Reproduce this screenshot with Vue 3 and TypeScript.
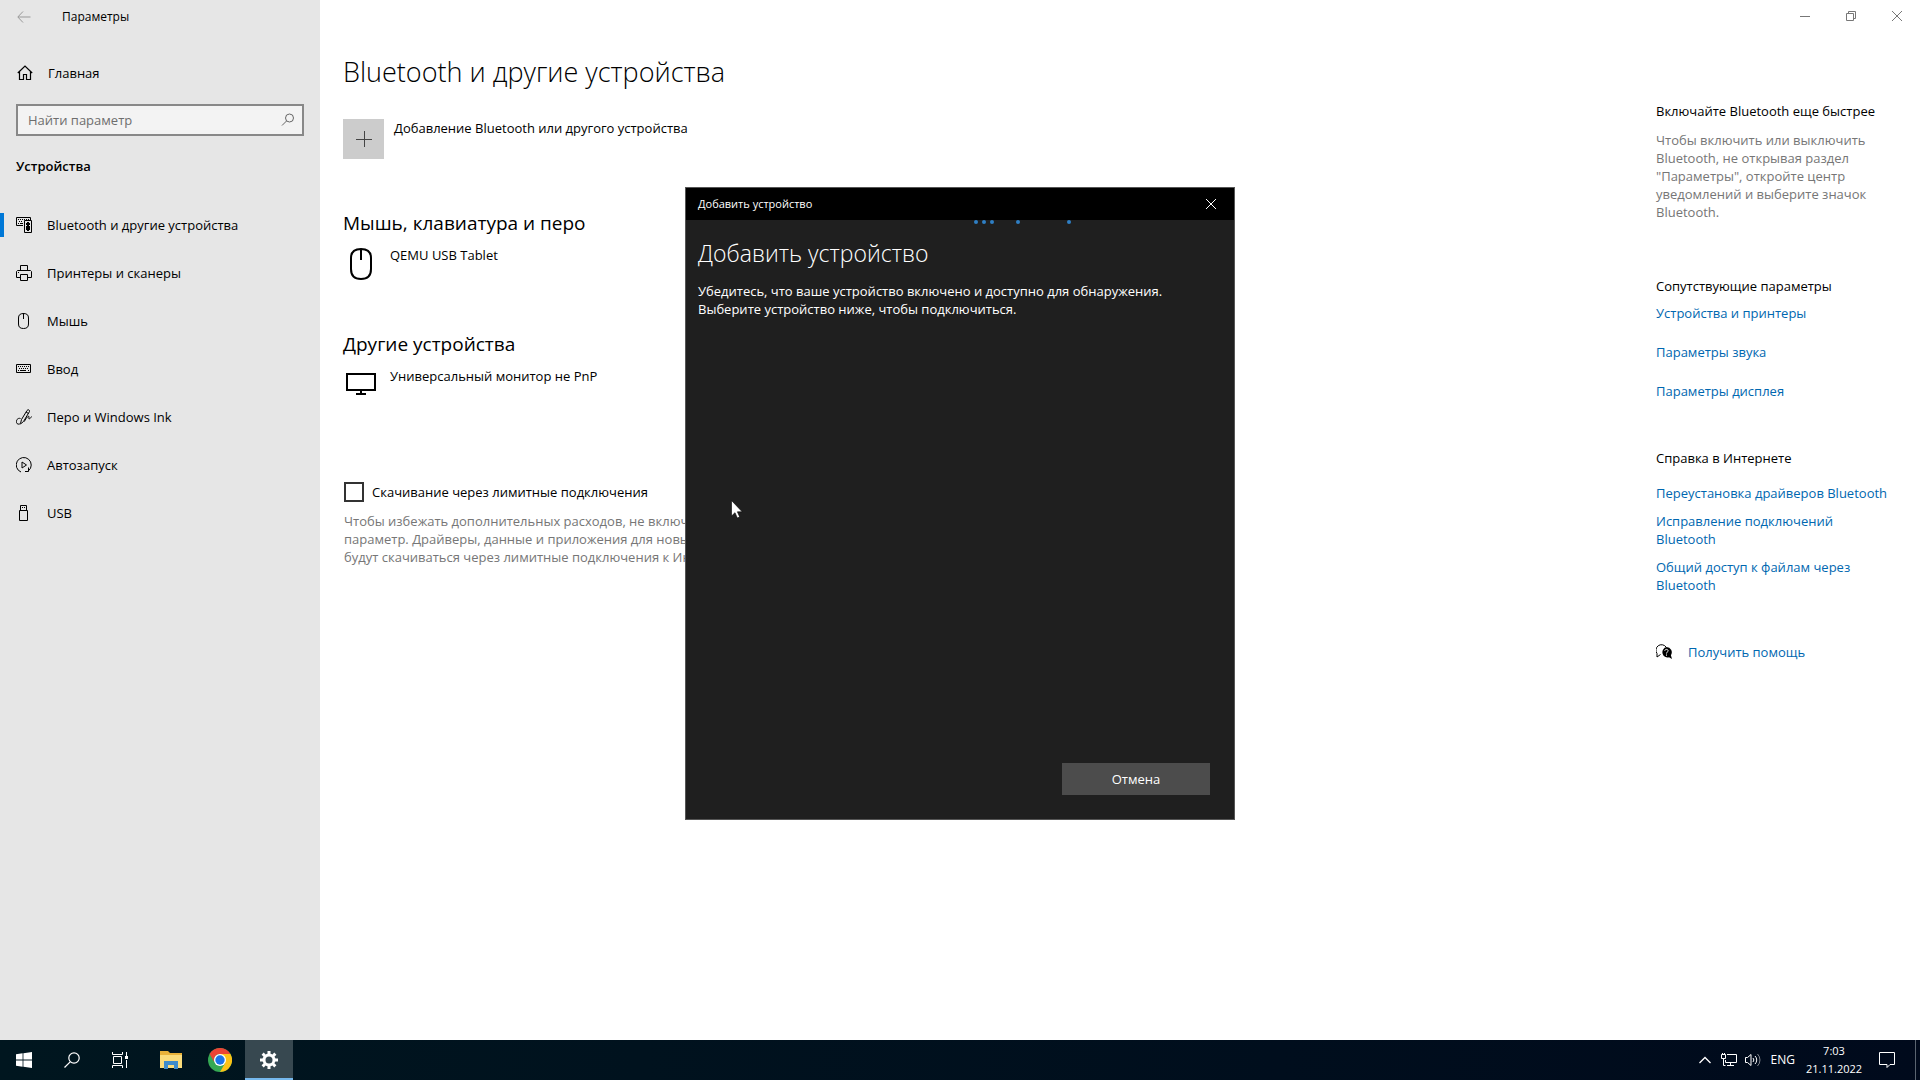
<script setup lang="ts">
import { ref } from 'vue'

interface NavItem {
  label: string
  stroke: string
  fill?: string
}

const navItems: NavItem[] = [
  {
    label: 'Bluetooth и другие устройства',
    stroke: 'M7 8.5H.5V.5H14.5V3M8.5 3.5h7v12h-7z',
    fill: 'M2 2h1v1H2zM4 2h1v1H4zM6 2h1v1H6zM8 2h1v1H8zM10 2h1v1h-1zM12 2h1v1h-1zM3 4h1v1H3zM5 4h1v1H5zM2 6h1v1H2zM4 6h3v1H4zM11 5h2v1h1v2h-1v1h1v4h-1v1h-2v-1h-1V9h1V8h-1V6h1z',
  },
  {
    label: 'Принтеры и сканеры',
    stroke: 'M4.5 5V.5h7V5M4.5 12.5h-4v-6l1-1h13l1 1v6h-4M4.5 9.5h7v6h-7z',
    fill: 'M2 7h1v1H2z',
  },
  { label: 'Мышь', stroke: 'M7.5 0v6M7.5.5c3.5 0 5 1.5 5 4.500v6c0 3-1.500 4.500-5 4.500s-5-1.500-5-4.500v-6c0-3 1.500-4.500 5-4.500z' },
  {
    label: 'Ввод',
    stroke: 'M.5 3.500h14v8H.5z',
    fill: 'M2 5h1v1H2zM4 5h1v1H4zM6 5h1v1H6zM8 5h1v1H8zM10 5h1v1h-1zM12 5h1v1h-1zM3 7h1v1H3zM5 7h1v1H5zM7 7h1v1H7zM9 7h1v1H9zM11 7h1v1h-1zM2 9h1v1H2zM4 9h6v1H4zM12 9h1v1h-1z',
  },
  {
    label: 'Перо и Windows Ink',
    stroke: 'M4.500 14.500l1-4L11 1.500c1-1.500 3-.5 2.500 1L7.500 12.500l-3 2.500M10 3l2.500 1.500M4.500 9.500C1.500 8.500 0 11.500.5 13.500s2.500 2 4 1M8.500 12.500c.5-2 3.500-6 4.500-5 .5.8-1 2 0 2.200s1.500-.5 2.500-2.200',
  },
  { label: 'Автозапуск', stroke: 'M5 15A7.500 7.500 0 1 1 12.500 13.800M12.500 10.500v4h-3.500M6 5l4.500 3L6 11z' },
  { label: 'USB', stroke: 'M3.500 5.500h8v10h-8zM4.500 5V.5h6V5', fill: 'M6 2h1v1H6zM8 2h1v1H8z' },
]

const relatedLinks = ['Устройства и принтеры', 'Параметры звука', 'Параметры дисплея']
const helpLinks = [
  'Переустановка драйверов Bluetooth',
  'Исправление подключений Bluetooth',
  'Общий доступ к файлам через Bluetooth',
]
const progressDots = [0, 8, 16, 42, 93]

const query = ref('')
const metered = ref(false)
</script>

<template>
  <div class="desktop">
    <div class="window">
      <aside class="sidebar">
        <div class="caption">
          <button class="back" aria-label="Назад">
            <svg width="14" height="12" viewBox="0 0 14 12" fill="none" stroke="currentColor"><path d="M6 .5L.8 6 6 11.500M1 6h12.500" /></svg>
          </button>
          <span>Параметры</span>
        </div>
        <a class="home" href="#">
          <svg width="16" height="16" viewBox="0 0 16 16" fill="none" stroke="currentColor" stroke-width="1.200">
            <path d="M.8 8L8 1l7.200 7M2.500 6.500v8h4V9.500h3v5h4v-8" />
          </svg>
          <span>Главная</span>
        </a>
        <div class="search">
          <input v-model="query" type="text" placeholder="Найти параметр" aria-label="Найти параметр" />
          <svg width="14" height="14" viewBox="0 0 14 14" fill="none" stroke="currentColor"><circle cx="8.500" cy="5" r="4" /><path d="M5.500 8L1 12.500" /></svg>
        </div>
        <h2 class="section">Устройства</h2>
        <nav>
          <a v-for="(item, i) in navItems" :key="item.label" href="#" class="nav-item" :class="{ active: i === 0 }">
            <svg width="16" height="16" viewBox="0 0 16 16">
              <path :d="item.stroke" fill="none" stroke="currentColor" />
              <path v-if="item.fill" :d="item.fill" fill="currentColor" />
            </svg>
            <span>{{ item.label }}</span>
          </a>
        </nav>
      </aside>

      <main class="content">
        <h1>Bluetooth и другие устройства</h1>
        <button class="add">
          <span class="plus">
            <svg width="16" height="16" viewBox="0 0 16 16" stroke="#444" stroke-width="1"><path d="M0 8.500h16M8.500 0v16" /></svg>
          </span>
          <span>Добавление Bluetooth или другого устройства</span>
        </button>

        <h2 class="group">Мышь, клавиатура и перо</h2>
        <div class="device">
          <svg width="36" height="32" viewBox="0 0 36 32" fill="none" stroke="#000" stroke-width="2">
            <path d="M18 1v11M18 1c7 0 10 3 10 9v11c0 7-3 10-10 10S8 28 8 21V10c0-6 3-9 10-9z" />
          </svg>
          <span>QEMU USB Tablet</span>
        </div>

        <h2 class="group">Другие устройства</h2>
        <div class="device">
          <svg width="36" height="32" viewBox="0 0 36 32" fill="none" stroke="#000" stroke-width="2">
            <path d="M4 5h28v16H4zM18 21v4M13 25h10" />
          </svg>
          <span>Универсальный монитор не PnP</span>
        </div>

        <label class="check">
          <input v-model="metered" type="checkbox" />
          <span>Скачивание через лимитные подключения</span>
        </label>
        <p class="note">
          Чтобы избежать дополнительных расходов, не включайте этот<br />
          параметр. Драйверы, данные и приложения для новых устройств<br />
          будут скачиваться через лимитные подключения к Интернету.
        </p>
      </main>

      <aside class="side">
        <div class="controls">
          <button aria-label="Свернуть"><svg width="10" height="10" viewBox="0 0 10 10"><path d="M0 5.500h10" /></svg></button>
          <button aria-label="Восстановить"><svg width="10" height="10" viewBox="0 0 10 10"><path d="M.5 2.500h7v7h-7zM2.500 2.500v-2h7v7h-2" /></svg></button>
          <button aria-label="Закрыть"><svg width="10" height="10" viewBox="0 0 10 10"><path d="M0 0l10 10M10 0L0 10" /></svg></button>
        </div>
        <div class="side-body">
          <h3>Включайте Bluetooth еще быстрее</h3>
          <p>Чтобы включить или выключить Bluetooth, не открывая раздел "Параметры", откройте центр уведомлений и выберите значок Bluetooth.</p>
          <section class="related">
            <h3>Сопутствующие параметры</h3>
            <a v-for="link in relatedLinks" :key="link" href="#">{{ link }}</a>
          </section>
          <section class="help">
            <h3>Справка в Интернете</h3>
            <a v-for="link in helpLinks" :key="link" href="#">{{ link }}</a>
          </section>
          <a class="support" href="#">
            <svg width="16" height="16" viewBox="0 0 16 16">
              <path d="M4.500 10.500L1 13V9.500A5 5 0 1 1 10 3" fill="none" stroke="#000" />
              <path d="M10.500 3a5.300 5.300 0 0 1 4.400 8.200L16 15l-3-1.700A5.300 5.300 0 1 1 10.500 3z" fill="#000" />
              <path d="M8.800 6.800c.2-2 3.400-1.800 3.300.1-.1 1.200-1.600 1.200-1.600 2.600M10.500 10.500v1.200" fill="none" stroke="#fff" />
            </svg>
            <span>Получить помощь</span>
          </a>
        </div>
      </aside>
    </div>

    <footer class="taskbar">
      <div class="apps">
        <button aria-label="Пуск">
          <svg width="16" height="16" viewBox="0 0 16 16" fill="#fff"><path d="M0 2.200L6.600 1.300v6.300H0zM7.400 1.200L16 0v7.600H7.400zM0 8.400h6.600v6.300L0 13.800zM7.400 8.400H16V16l-8.600-1.200z" /></svg>
        </button>
        <button aria-label="Поиск">
          <svg width="16" height="16" viewBox="0 0 16 16" fill="none" stroke="#fff" stroke-width="1.200"><circle cx="10" cy="6" r="5.200" /><path d="M6.200 9.800L.5 15.500" /></svg>
        </button>
        <button aria-label="Представление задач">
          <svg width="16" height="16" viewBox="0 0 16 16" fill="none" stroke="#fff"><path d="M.5 0v2.500h10V0M.5 16v-2.500h10V16M1.500 4.500h8v7h-8zM14.500 0v4M14.500 8v8" /><path d="M13 4h3v3h-3z" fill="#fff" stroke="none" /></svg>
        </button>
        <div class="pinned">
          <button aria-label="Проводник">
            <svg width="22" height="18" viewBox="0 0 22 18">
              <path d="M0 0h8l2 2h12v15H0z" fill="#e9b23a" />
              <path d="M0 4h22v13H0z" fill="#fbdc7b" />
              <path d="M4 10h14v8h-4v-4H8v4H4z" fill="#3e8bcb" />
            </svg>
          </button>
          <button aria-label="Chrome">
            <svg width="24" height="24" viewBox="0 0 24 24">
              <circle cx="12" cy="12" r="12" fill="#34a853" />
              <path d="M12 6h10.400A12 12 0 0 1 12 24l5.200-9z" fill="#fbc116" />
              <path d="M1.600 6A12 12 0 0 1 22.400 6H12a6 6 0 0 0-5.200 9z" fill="#ea4335" />
              <circle cx="12" cy="12" r="6" fill="#fff" />
              <circle cx="12" cy="12" r="4.700" fill="#1a73e8" />
            </svg>
          </button>
          <button aria-label="Параметры" class="current">
            <svg width="18" height="18" viewBox="-9 -9 18 18" fill="none" stroke="#fff">
              <circle r="5" stroke-width="3" />
              <path v-for="a in [0, 45, 90, 135]" :key="a" :transform="`rotate(${a})`" d="M0-9v4M0 5v4" stroke-width="3" />
            </svg>
          </button>
        </div>
      </div>
      <div class="tray">
        <svg width="12" height="8" viewBox="0 0 12 8"><path d="M.5 7L6 1.500 11.500 7" stroke-width="1.300" /></svg>
        <svg class="net" width="16" height="14" viewBox="0 0 16 14"><path d="M6 1.500h9.500v8H4.500V7M9.500 9.500v3M6 12.500h7M.5 1.500h4v4h-4zM2.500 5.500v7h2M1.500 0v1.500M3.500 0v1.500" /></svg>
        <svg class="snd" width="16" height="14" viewBox="0 0 16 14"><path d="M.5 4.500h2L6 1.500v11L2.500 9.500h-2zM8 5a3 3 0 0 1 0 4M10 3a5.500 5.500 0 0 1 0 8" /><path d="M12.500 1a8.500 8.500 0 0 1 0 12" opacity=".5" /></svg>
        <span class="lang">ENG</span>
        <div class="clock"><span>7:03</span><span>21.11.2022</span></div>
        <svg class="action" width="16" height="16" viewBox="0 0 16 16"><path d="M.5.5h15v12h-4.500l-3 3v-3H.5z" /></svg>
        <i class="peek"></i>
      </div>
    </footer>

    <div class="dialog" role="dialog" aria-labelledby="dlg-title">
      <div class="dialog-bar">
        <span>Добавить устройство</span>
        <button aria-label="Закрыть"><svg width="12" height="12" viewBox="0 0 12 12" stroke="#fff" fill="none"><path d="M1 1l10 10M11 1L1 11" /></svg></button>
      </div>
      <div class="dialog-body">
        <svg class="progress" width="97" height="4" viewBox="0 0 97 4" fill="#2f7fc4">
          <circle v-for="x in progressDots" :key="x" :cx="x + 2" cy="2" r="2" />
        </svg>
        <h2 id="dlg-title">Добавить устройство</h2>
        <p>Убедитесь, что ваше устройство включено и доступно для обнаружения.<br />Выберите устройство ниже, чтобы подключиться.</p>
        <button class="cancel">Отмена</button>
      </div>
    </div>

    <svg class="cursor" width="12" height="19" viewBox="0 0 12 19"><path d="M.5.5v15.500l3.500-3.300 2.300 5.300 2.400-1-2.300-5.200h4.800z" fill="#fff" stroke="#000" stroke-width=".6" /></svg>
  </div>
</template>

<style>
body {
  margin: 0;
}
</style>

<style scoped>
.desktop {
  position: relative;
  display: flex;
  flex-direction: column;
  min-height: 100vh;
  background: #fff;
  color: #000;
  font: 13px/18px 'Open Sans', 'Noto Sans', sans-serif;
}
h1, h2, h3, p {
  margin: 0;
  font-weight: 400;
}
a {
  color: inherit;
  text-decoration: none;
}
button {
  padding: 0;
  border: 0;
  background: none;
  color: inherit;
  font: inherit;
}
svg {
  display: block;
  flex: none;
}
.window {
  flex: 1;
  display: flex;
}
.sidebar {
  flex: none;
  width: 320px;
  background: #e6e6e6;
}
.caption {
  display: flex;
  align-items: center;
  height: 33px;
  padding-left: 17px;
  font-size: 12px;
}
.back {
  width: 45px;
  color: #999;
}
.home {
  display: flex;
  align-items: center;
  gap: 15px;
  height: 48px;
  margin-top: 16px;
  padding-left: 17px;
}
.search {
  display: flex;
  align-items: center;
  box-sizing: border-box;
  height: 32px;
  margin: 7px 16px 0;
  padding: 0 7px 0 10px;
  border: 2px solid #888;
  background: #f3f3f3;
  color: #666;
}
.search input {
  flex: 1;
  min-width: 0;
  padding: 0;
  border: 0;
  outline: 0;
  background: none;
  font: inherit;
}
.search input::placeholder {
  color: #6e6e6e;
  opacity: 1;
}
.section {
  margin: 21px 0 26px 16px;
  font-size: 13px;
  font-weight: 600;
}
.nav-item {
  display: flex;
  align-items: center;
  gap: 15px;
  height: 48px;
  padding-left: 16px;
}
.nav-item.active {
  background: linear-gradient(#0078d7, #0078d7) 0 center / 4px 24px no-repeat;
}
.content {
  flex: 1;
  min-width: 0;
  padding: 52px 0 0 23px;
}
h1 {
  font-size: 27px;
  line-height: 40px;
  font-weight: 300;
}
.add {
  display: flex;
  gap: 10px;
  margin-top: 27px;
  text-align: left;
}
.plus {
  display: grid;
  place-items: center;
  width: 41px;
  height: 40px;
  background: #ccc;
}
.group {
  margin-top: 50px;
  font-size: 19px;
  line-height: 28px;
}
.device {
  display: flex;
  gap: 11px;
  margin-top: 9px;
}
.device svg {
  margin-top: 2px;
}
.check {
  display: flex;
  align-items: center;
  gap: 8px;
  margin-top: 81px;
}
.check input {
  appearance: none;
  width: 20px;
  height: 20px;
  margin: 0;
  margin-left: 1px;
  border: 2px solid #333;
}
.note {
  margin: 10px 0 0 1px;
  color: #767676;
}
.side {
  flex: none;
  width: 264px;
}
.controls {
  display: flex;
  justify-content: flex-end;
  height: 32px;
}
.controls button {
  display: grid;
  place-items: center;
  width: 46px;
}
.controls path {
  fill: none;
  stroke: #777;
}
.side-body {
  width: 236px;
  margin-top: 70px;
}
.side h3 {
  font-size: 13px;
}
.side p {
  margin-top: 11px;
  color: #767676;
}
.side section a,
.support {
  display: block;
  color: #0067b0;
}
.related {
  margin-top: 56px;
}
.related a {
  margin-top: 21px;
}
.related h3 + a {
  margin-top: 9px;
}
.help {
  margin-top: 49px;
}
.help a {
  margin-top: 10px;
}
.help h3 + a {
  margin-top: 17px;
}
.side .support {
  display: flex;
  align-items: center;
  gap: 16px;
  margin-top: 49px;
}
.taskbar {
  display: flex;
  justify-content: space-between;
  height: 40px;
  background: linear-gradient(90deg, #00161f, #000a1c);
  color: #fff;
  font-size: 12px;
}
.apps,
.pinned {
  display: flex;
}
.apps button {
  display: grid;
  place-items: center;
  width: 48px;
}
.pinned {
  gap: 1px;
  margin-left: 3px;
}
.pinned .current {
  background: #374850;
  box-shadow: inset 0 -2px #76b9ed;
}
.tray {
  display: flex;
  align-items: center;
}
.tray path {
  fill: none;
  stroke: #fff;
}
.net {
  margin-left: 10px;
}
.snd {
  margin-left: 8px;
}
.lang {
  margin-left: 10px;
}
.clock {
  display: flex;
  flex-direction: column;
  width: 78px;
  text-align: center;
  font-size: 11px;
}
.action {
  margin-right: 20px;
  margin-left: 6px;
}
.peek {
  align-self: stretch;
  width: 4px;
  border-left: 1px solid #5a6470;
}
.dialog {
  position: absolute;
  top: 187px;
  left: 50%;
  display: flex;
  flex-direction: column;
  box-sizing: border-box;
  width: 550px;
  height: 633px;
  border: 1px solid #555;
  background: #1f1f1f;
  color: #fff;
  transform: translateX(-50%);
}
.dialog-bar {
  display: flex;
  align-items: center;
  justify-content: space-between;
  height: 32px;
  padding: 0 17px 0 12px;
  background: #000;
  font-size: 11px;
}
.dialog-body {
  position: relative;
  flex: 1;
  display: flex;
  flex-direction: column;
  padding: 17px 24px 24px 12px;
}
.progress {
  position: absolute;
  top: 0;
  left: 288px;
}
.dialog h2 {
  font-size: 23px;
  line-height: 32px;
  font-weight: 300;
}
.dialog p {
  margin-top: 13px;
}
.cancel {
  align-self: flex-end;
  width: 148px;
  height: 32px;
  margin-top: auto;
  background: #4c4c4c;
}
.cursor {
  position: absolute;
  top: 500px;
  left: 731px;
}
</style>
